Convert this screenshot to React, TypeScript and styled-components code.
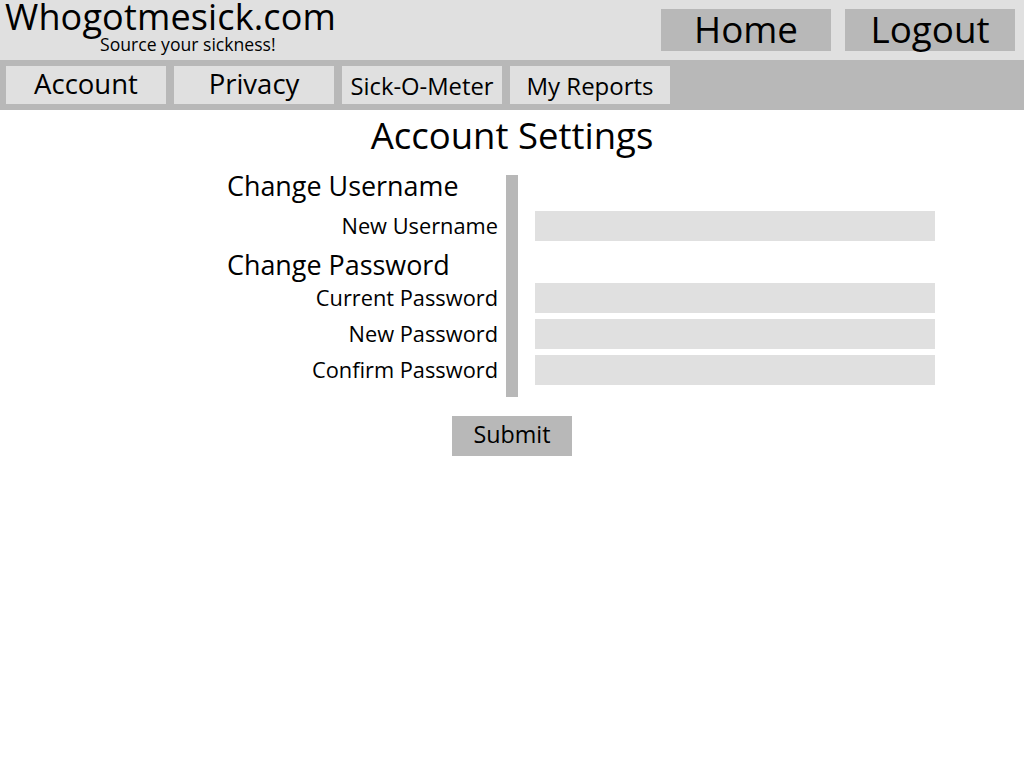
import React from "react";
import styled, { createGlobalStyle } from "styled-components";

const Global = createGlobalStyle`
  html, body { margin: 0; padding: 0; background: #ffffff; }
  body { font-family: "Open Sans", "Lato", sans-serif; color: #000; }
  * { box-sizing: border-box; }
`;

const Header = styled.header`
  height: 60px;
  background: #e0e0e0;
  display: flex;
  justify-content: space-between;
  align-items: flex-start;
  padding: 0 9px 0 5px;
`;

const Brand = styled.div`
  display: flex;
  flex-direction: column;
  padding-top: 2px;
`;

const Logo = styled.div`
  font-size: 36px;
  line-height: 30px;
  height: 30px;
  letter-spacing: 0.15px;
  white-space: nowrap;
`;

const Tagline = styled.div`
  font-size: 17.6px;
  line-height: 20px;
  padding-left: 95px;
  margin-top: 2px;
  white-space: nowrap;
`;

const TopActions = styled.div`
  display: flex;
  gap: 14px;
  padding-top: 9px;
`;

const TopButton = styled.button`
  width: 170px;
  height: 42px;
  border: none;
  background: #b8b8b8;
  font-family: inherit;
  font-size: 36.8px;
  line-height: 38px;
  padding: 0 0 3px;
  color: #000;
  cursor: pointer;
`;

const Nav = styled.nav`
  height: 50px;
  background: #b8b8b8;
  display: flex;
  gap: 8px;
  padding: 6px;
`;

const Tab = styled.button<{ $size: number }>`
  width: 160px;
  height: 38px;
  border: none;
  background: #e0e0e0;
  font-family: inherit;
  font-size: ${(p) => p.$size}px;
  line-height: 36px;
  padding: ${(p) => (p.$size < 26 ? "2px 0 0" : "0 0 2px")};
  color: #000;
  white-space: nowrap;
  cursor: pointer;
`;

const Main = styled.main`
  display: flex;
  flex-direction: column;
  align-items: center;
`;

const Title = styled.h1`
  margin: 5px 0 20px;
  font-weight: 400;
  font-size: 36.5px;
  line-height: 40px;
  white-space: nowrap;
`;

const Form = styled.form`
  align-self: flex-start;
  margin-left: 227px;
  display: grid;
  grid-template-columns: 279px 12px 417px;
  grid-template-rows: 36px 30px 42px 36px 36px 30px;
  padding-bottom: 12px;
`;

const Bar = styled.div`
  grid-column: 2;
  grid-row: 1 / span 6;
  margin-bottom: -12px;
  background: #b8b8b8;
`;

const Heading = styled.h2<{ $row: number; $shift: number }>`
  grid-column: 1;
  grid-row: ${(p) => p.$row};
  margin: ${(p) => p.$shift}px 0 0;
  font-weight: 400;
  font-size: 26.9px;
  line-height: 30px;
  height: 30px;
  align-self: start;
  white-space: nowrap;
`;

const Label = styled.label<{ $row: number }>`
  grid-column: 1;
  grid-row: ${(p) => p.$row};
  justify-self: end;
  align-self: start;
  padding-right: 8px;
  font-size: 21.8px;
  line-height: 30px;
  height: 30px;
  white-space: nowrap;
`;

const Input = styled.input<{ $row: number }>`
  grid-column: 3;
  grid-row: ${(p) => p.$row};
  align-self: start;
  margin-left: 17px;
  width: 400px;
  height: 30px;
  border: none;
  background: #e0e0e0;
  outline: none;
  font-family: inherit;
  font-size: 18px;
  padding: 0 8px;
`;

const Submit = styled.button`
  margin-top: 19px;
  width: 120px;
  height: 40px;
  border: none;
  background: #b8b8b8;
  font-family: inherit;
  font-size: 23.3px;
  line-height: 36px;
  padding: 0 0 4px;
  color: #000;
  cursor: pointer;
`;

export default function App() {
  return (
    <>
      <Global />
      <Header>
        <Brand>
          <Logo>Whogotmesick.com</Logo>
          <Tagline>Source your sickness!</Tagline>
        </Brand>
        <TopActions>
          <TopButton>Home</TopButton>
          <TopButton>Logout</TopButton>
        </TopActions>
      </Header>
      <Nav>
        <Tab $size={27.5}>Account</Tab>
        <Tab $size={27.5}>Privacy</Tab>
        <Tab $size={23.8}>Sick-O-Meter</Tab>
        <Tab $size={24}>My Reports</Tab>
      </Nav>
      <Main>
        <Title>Account Settings</Title>
        <Form onSubmit={(e) => e.preventDefault()}>
          <Heading $row={1} $shift={-4}>Change Username</Heading>
          <Label $row={2}>New Username</Label>
          <Input $row={2} type="text" />
          <Heading $row={3} $shift={9}>Change Password</Heading>
          <Label $row={4}>Current Password</Label>
          <Input $row={4} type="password" />
          <Label $row={5}>New Password</Label>
          <Input $row={5} type="password" />
          <Label $row={6}>Confirm Password</Label>
          <Input $row={6} type="password" />
          <Bar />
        </Form>
        <Submit>Submit</Submit>
      </Main>
    </>
  );
}
